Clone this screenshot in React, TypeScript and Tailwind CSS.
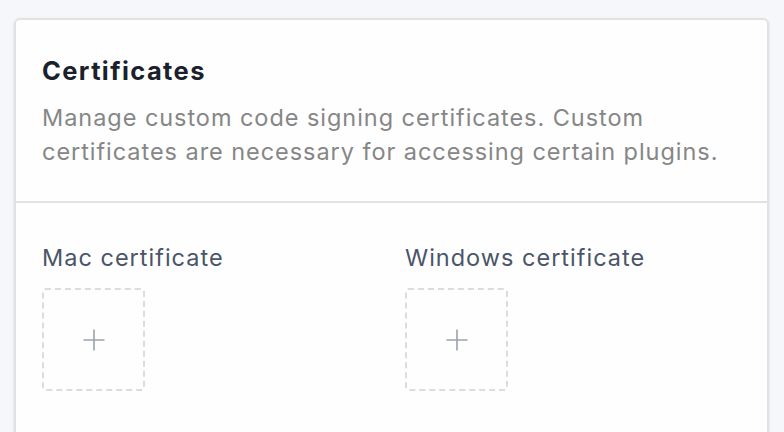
export default function App() {
  return (
    <div
      className="h-[432px] w-[784px] overflow-hidden bg-[#f5f7fa] pt-[18px] pl-[14px] pr-[15px]"
      style={{ fontFamily: 'Inter, "Noto Sans", sans-serif' }}
    >
      <div className="h-[440px] rounded-[6px] border-2 border-[#e2e2e2] bg-[#fefefe] shadow-sm">
        {/* header */}
        <div className="border-b-2 border-[#e2e2e2] px-[26px] pt-[34px] pb-[32px]">
          <h2 className="text-[25.5px] font-bold leading-[34px] tracking-[1.4px] text-[#1a202c]">Certificates</h2>
          <p className="mt-[13px] text-[23.5px] leading-[34px] tracking-[0.95px] text-[#868686]">
            Manage custom code signing certificates. Custom
            <br />
            certificates are necessary for accessing certain plugins.
          </p>
        </div>

        {/* certificates */}
        <div className="grid grid-cols-2 gap-[27px] px-[26px] pt-[38px]">
          <CertSlot label="Mac certificate" />
          <CertSlot label="Windows certificate" />
        </div>
      </div>
    </div>
  )
}

function CertSlot({ label }: { label: string }) {
  return (
    <div>
      <div className="text-[23.5px] leading-[34px] tracking-[1px] text-[#4a5568]">{label}</div>
      <button className="mt-[13px] flex h-[103px] w-[103px] items-center justify-center rounded-[3px] border-2 border-dashed border-[#dcdcdc]">
        <svg width="24" height="24" viewBox="0 0 24 24" fill="none" stroke="#9aa1ad" strokeWidth="1.6">
          <path d="M12 1.5v21M1.5 12h21" />
        </svg>
      </button>
    </div>
  )
}
